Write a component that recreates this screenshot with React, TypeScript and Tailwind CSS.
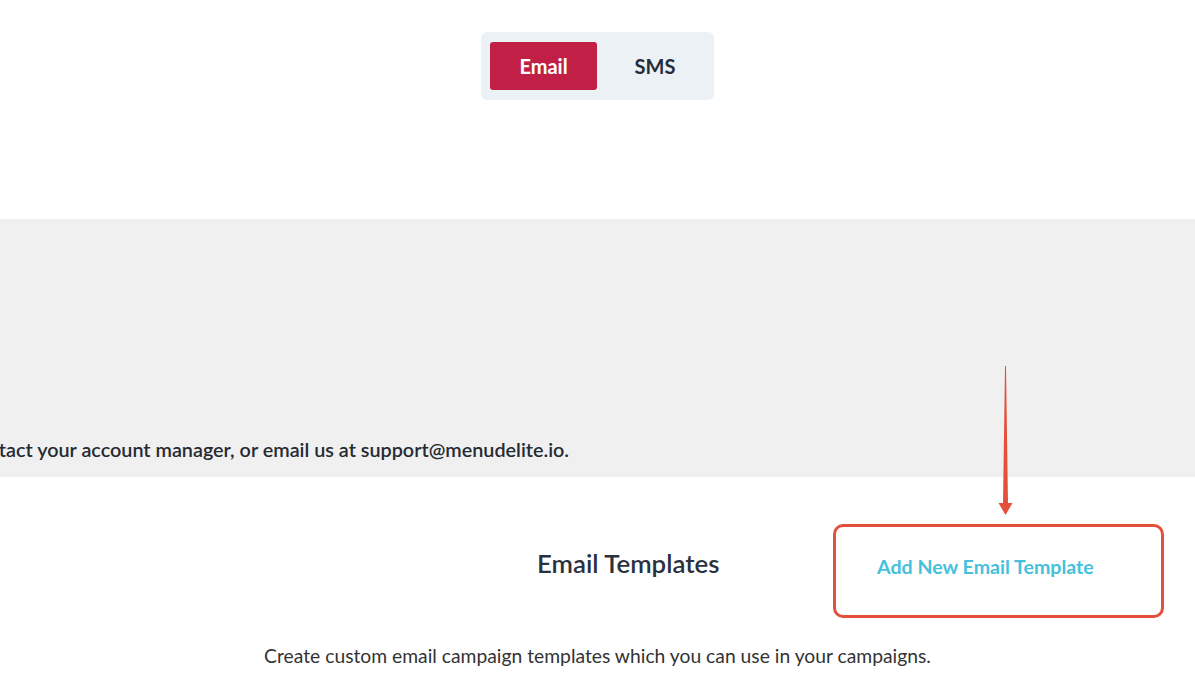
import React, { useState } from 'react';

const font = { fontFamily: 'Lato, "Open Sans", sans-serif' };

export default function App() {
    const [tab, setTab] = useState<'email' | 'sms'>('email');

    return (
        <div className="w-[1195px] h-[692px] bg-white overflow-hidden font-[Lato,_sans-serif]" style={font}>
            {/* channel tabs */}
            <div className="flex justify-center pt-[32px]">
                <div className="flex bg-[#ecf1f6] rounded-md pl-[9px] pr-[9px] py-[10px] w-[233px]">
                    <button
                        className={`w-[107px] h-[48px] rounded-[3px] text-[20px] font-bold ${
                            tab === 'email' ? 'bg-[#c11f45] text-white' : 'text-[#262d3a]'
                        }`}
                        onClick={() => setTab('email')}
                    >
                        Email
                    </button>
                    <button
                        className={`flex-1 h-[48px] pl-[8px] rounded-[3px] text-[20px] font-bold ${
                            tab === 'sms' ? 'bg-[#c11f45] text-white' : 'text-[#262d3a]'
                        }`}
                        onClick={() => setTab('sms')}
                    >
                        SMS
                    </button>
                </div>
            </div>

            <div className="relative mt-[119px]">
                {/* notice band */}
                <div className="h-[258px] bg-[#f0f0f0] flex flex-col justify-end pb-[16px]">
                    <div className="w-[569px] overflow-hidden flex justify-end">
                        <p className="whitespace-nowrap text-[19.8px] leading-[24px] font-semibold text-[#262b33]">
                            Please contact your account manager, or email us at support@menudelite.io.
                        </p>
                    </div>
                </div>

                {/* heading row */}
                <div className="flex items-center justify-between pl-[537px] pr-[31px] mt-[47px]">
                    <h2 className="text-[25.8px] font-semibold text-[#2b323d] leading-[30px] -mt-[16px]">Email Templates</h2>
                    <div className="w-[331px] h-[94px] border-[3px] border-[#e4503c] rounded-[10px] flex items-center pl-[41px]">
                        <button className="text-[19.6px] font-bold text-[#45c1dc] -mt-[8px]">Add New Email Template</button>
                    </div>
                </div>

                {/* annotation arrow */}
                <svg className="absolute left-[996px] top-[147px]" width="20" height="152" viewBox="0 0 20 152">
                    <polygon points="9,0 10,0 12,138 7,138" fill="#e4503c" />
                    <polygon points="2.5,137 16.5,137 9.5,149" fill="#e4503c" />
                </svg>
            </div>

            <p className="text-center text-[19.3px] leading-[24px] text-[#333333] mt-[26px]">
                Create custom email campaign templates which you can use in your campaigns.
            </p>
        </div>
    );
}
